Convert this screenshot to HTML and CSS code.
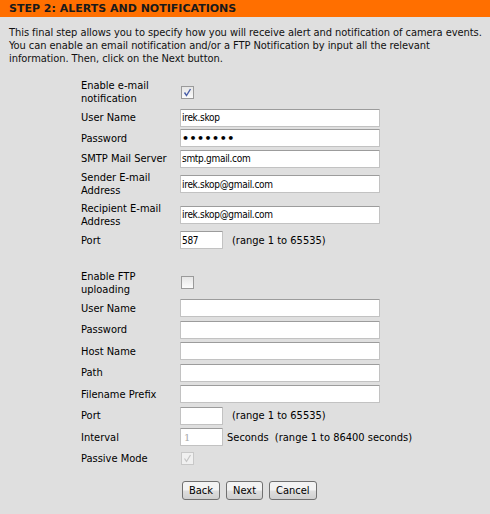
FILE: index.html
```html
<!DOCTYPE html>
<html lang="en">
  <head>
    <meta charset="UTF-8" />
    <title>Setup Wizard</title>
    <link rel="stylesheet" href="styles.css">
  </head>
  <body>
    <div class="wizard">
      <div class="step_title">STEP 2: ALERTS AND NOTIFICATIONS</div>
      <p class="intro">
        This final step allows you to specify how you will receive alert and notification of camera events.
        You can enable an email notification and/or a FTP Notification by input all the relevant
        information. Then, click on the Next button.
      </p>

      <div class="form mail">
        <div class="row">
          <label class="lbl">Enable e-mail notification</label>
          <span class="chk">
            <svg width="9" height="9" viewBox="0 0 9 9"><path d="M1.5 4.5 L3.5 7.5 L7.5 1" fill="none" stroke="#4a5fa8" stroke-width="1.4"/></svg>
          </span>
        </div>
        <div class="row">
          <label class="lbl">User Name</label>
          <input class="inp" type="text" value="irek.skop" />
        </div>
        <div class="row">
          <label class="lbl">Password</label>
          <input class="inp pwd" type="password" value="1234567" />
        </div>
        <div class="row">
          <label class="lbl">SMTP Mail Server</label>
          <input class="inp" type="text" value="smtp.gmail.com" />
        </div>
        <div class="row">
          <label class="lbl">Sender E-mail Address</label>
          <input class="inp" type="text" value="irek.skop@gmail.com" />
        </div>
        <div class="row">
          <label class="lbl">Recipient E-mail Address</label>
          <input class="inp" type="text" value="irek.skop@gmail.com" />
        </div>
        <div class="row">
          <label class="lbl">Port</label>
          <input class="inp short" type="text" value="587" />
          <span class="hint">(range 1 to 65535)</span>
        </div>
      </div>

      <div class="form ftp">
        <div class="row">
          <label class="lbl">Enable FTP uploading</label>
          <span class="chk"></span>
        </div>
        <div class="row">
          <label class="lbl">User Name</label>
          <input class="inp" type="text" />
        </div>
        <div class="row">
          <label class="lbl">Password</label>
          <input class="inp" type="password" />
        </div>
        <div class="row">
          <label class="lbl">Host Name</label>
          <input class="inp" type="text" />
        </div>
        <div class="row">
          <label class="lbl">Path</label>
          <input class="inp" type="text" />
        </div>
        <div class="row">
          <label class="lbl">Filename Prefix</label>
          <input class="inp" type="text" />
        </div>
        <div class="row">
          <label class="lbl">Port</label>
          <input class="inp short" type="text" />
          <span class="hint">(range 1 to 65535)</span>
        </div>
        <div class="row">
          <label class="lbl">Interval</label>
          <input class="inp short" type="text" value="1" disabled />
          <span class="hint near">Seconds&nbsp; (range 1 to 86400 seconds)</span>
        </div>
        <div class="row">
          <label class="lbl">Passive Mode</label>
          <span class="chk off">
            <svg width="9" height="9" viewBox="0 0 9 9"><path d="M1.5 4.5 L3.5 7.5 L7.5 1" fill="none" stroke="#c4c4c4" stroke-width="1.2"/></svg>
          </span>
        </div>
      </div>

      <div class="buttons">
        <button class="btn">Back</button>
        <button class="btn">Next</button>
        <button class="btn">Cancel</button>
      </div>
    </div>
  </body>
</html>
```

FILE: styles.css
```css
* {
  box-sizing: border-box;
  margin: 0;
  padding: 0;
}
body {
  background-color: #dfdfdf;
  font-family: "DejaVu Sans Condensed", "DejaVu Sans", sans-serif;
  font-size: 11px;
  color: #000;
}
.wizard {
  width: 490px;
  height: 514px;
}
.step_title {
  background-color: #ff6f00;
  height: 17px;
  line-height: 17px;
  padding-left: 9px;
  font-family: "DejaVu Sans", sans-serif;
  font-weight: bold;
  font-size: 11px;
  color: #1a1a1a;
}
.intro {
  padding: 9px 2px 0 9px;
  line-height: 13px;
  letter-spacing: -0.06px;
  color: #111;
}
.form {
  display: flex;
  flex-direction: column;
  padding-left: 81px;
}
.mail {
  margin-top: 13px;
  gap: 2.5px;
}
.ftp {
  margin-top: 20.5px;
  gap: 3.5px;
}
.row {
  display: flex;
  align-items: center;
  min-height: 18px;
}
.lbl {
  width: 99px;
  padding: 1px 6px 1px 0;
  line-height: 13px;
}
.ftp .lbl {
  padding: 0 6px 0 0;
}
.inp {
  width: 200px;
  height: 18px;
  padding: 0 1px;
  border: 1px solid #c2c2c2;
  border-top-color: #9c9c9c;
  border-radius: 1px;
  background: #fff;
  font-family: inherit;
  font-size: 10px;
  letter-spacing: -0.3px;
  color: #000;
  outline: none;
}
.pwd {
  font-family: "DejaVu Sans", sans-serif;
  font-size: 11px;
  font-weight: bold;
  letter-spacing: 0.5px;
}
.inp.short {
  width: 43px;
}
.inp:disabled {
  color: #a9a9a9;
  font-family: "DejaVu Serif", serif;
  padding-left: 3px;
  background: #fff;
}
.hint {
  margin-left: 9px;
}
.hint.near {
  margin-left: 4px;
}
.chk {
  display: flex;
  align-items: center;
  justify-content: center;
  width: 13px;
  height: 13px;
  margin-left: 1px;
  border: 1px solid #9a9a9a;
  background: linear-gradient(#e6e6e6, #fbfbfb);
}
.chk.off {
  border-color: #c8c8c8;
  background: #f0f0f0;
}
.buttons {
  display: flex;
  gap: 6px;
  padding-left: 182px;
  margin-top: 13px;
}
.btn {
  height: 19px;
  padding: 0 6px;
  border: 1px solid #707070;
  border-radius: 3px;
  background: linear-gradient(#f3f3f3 45%, #dddddd 55%, #cfcfcf);
  font-family: inherit;
  font-size: 11px;
  color: #000;
}
```
